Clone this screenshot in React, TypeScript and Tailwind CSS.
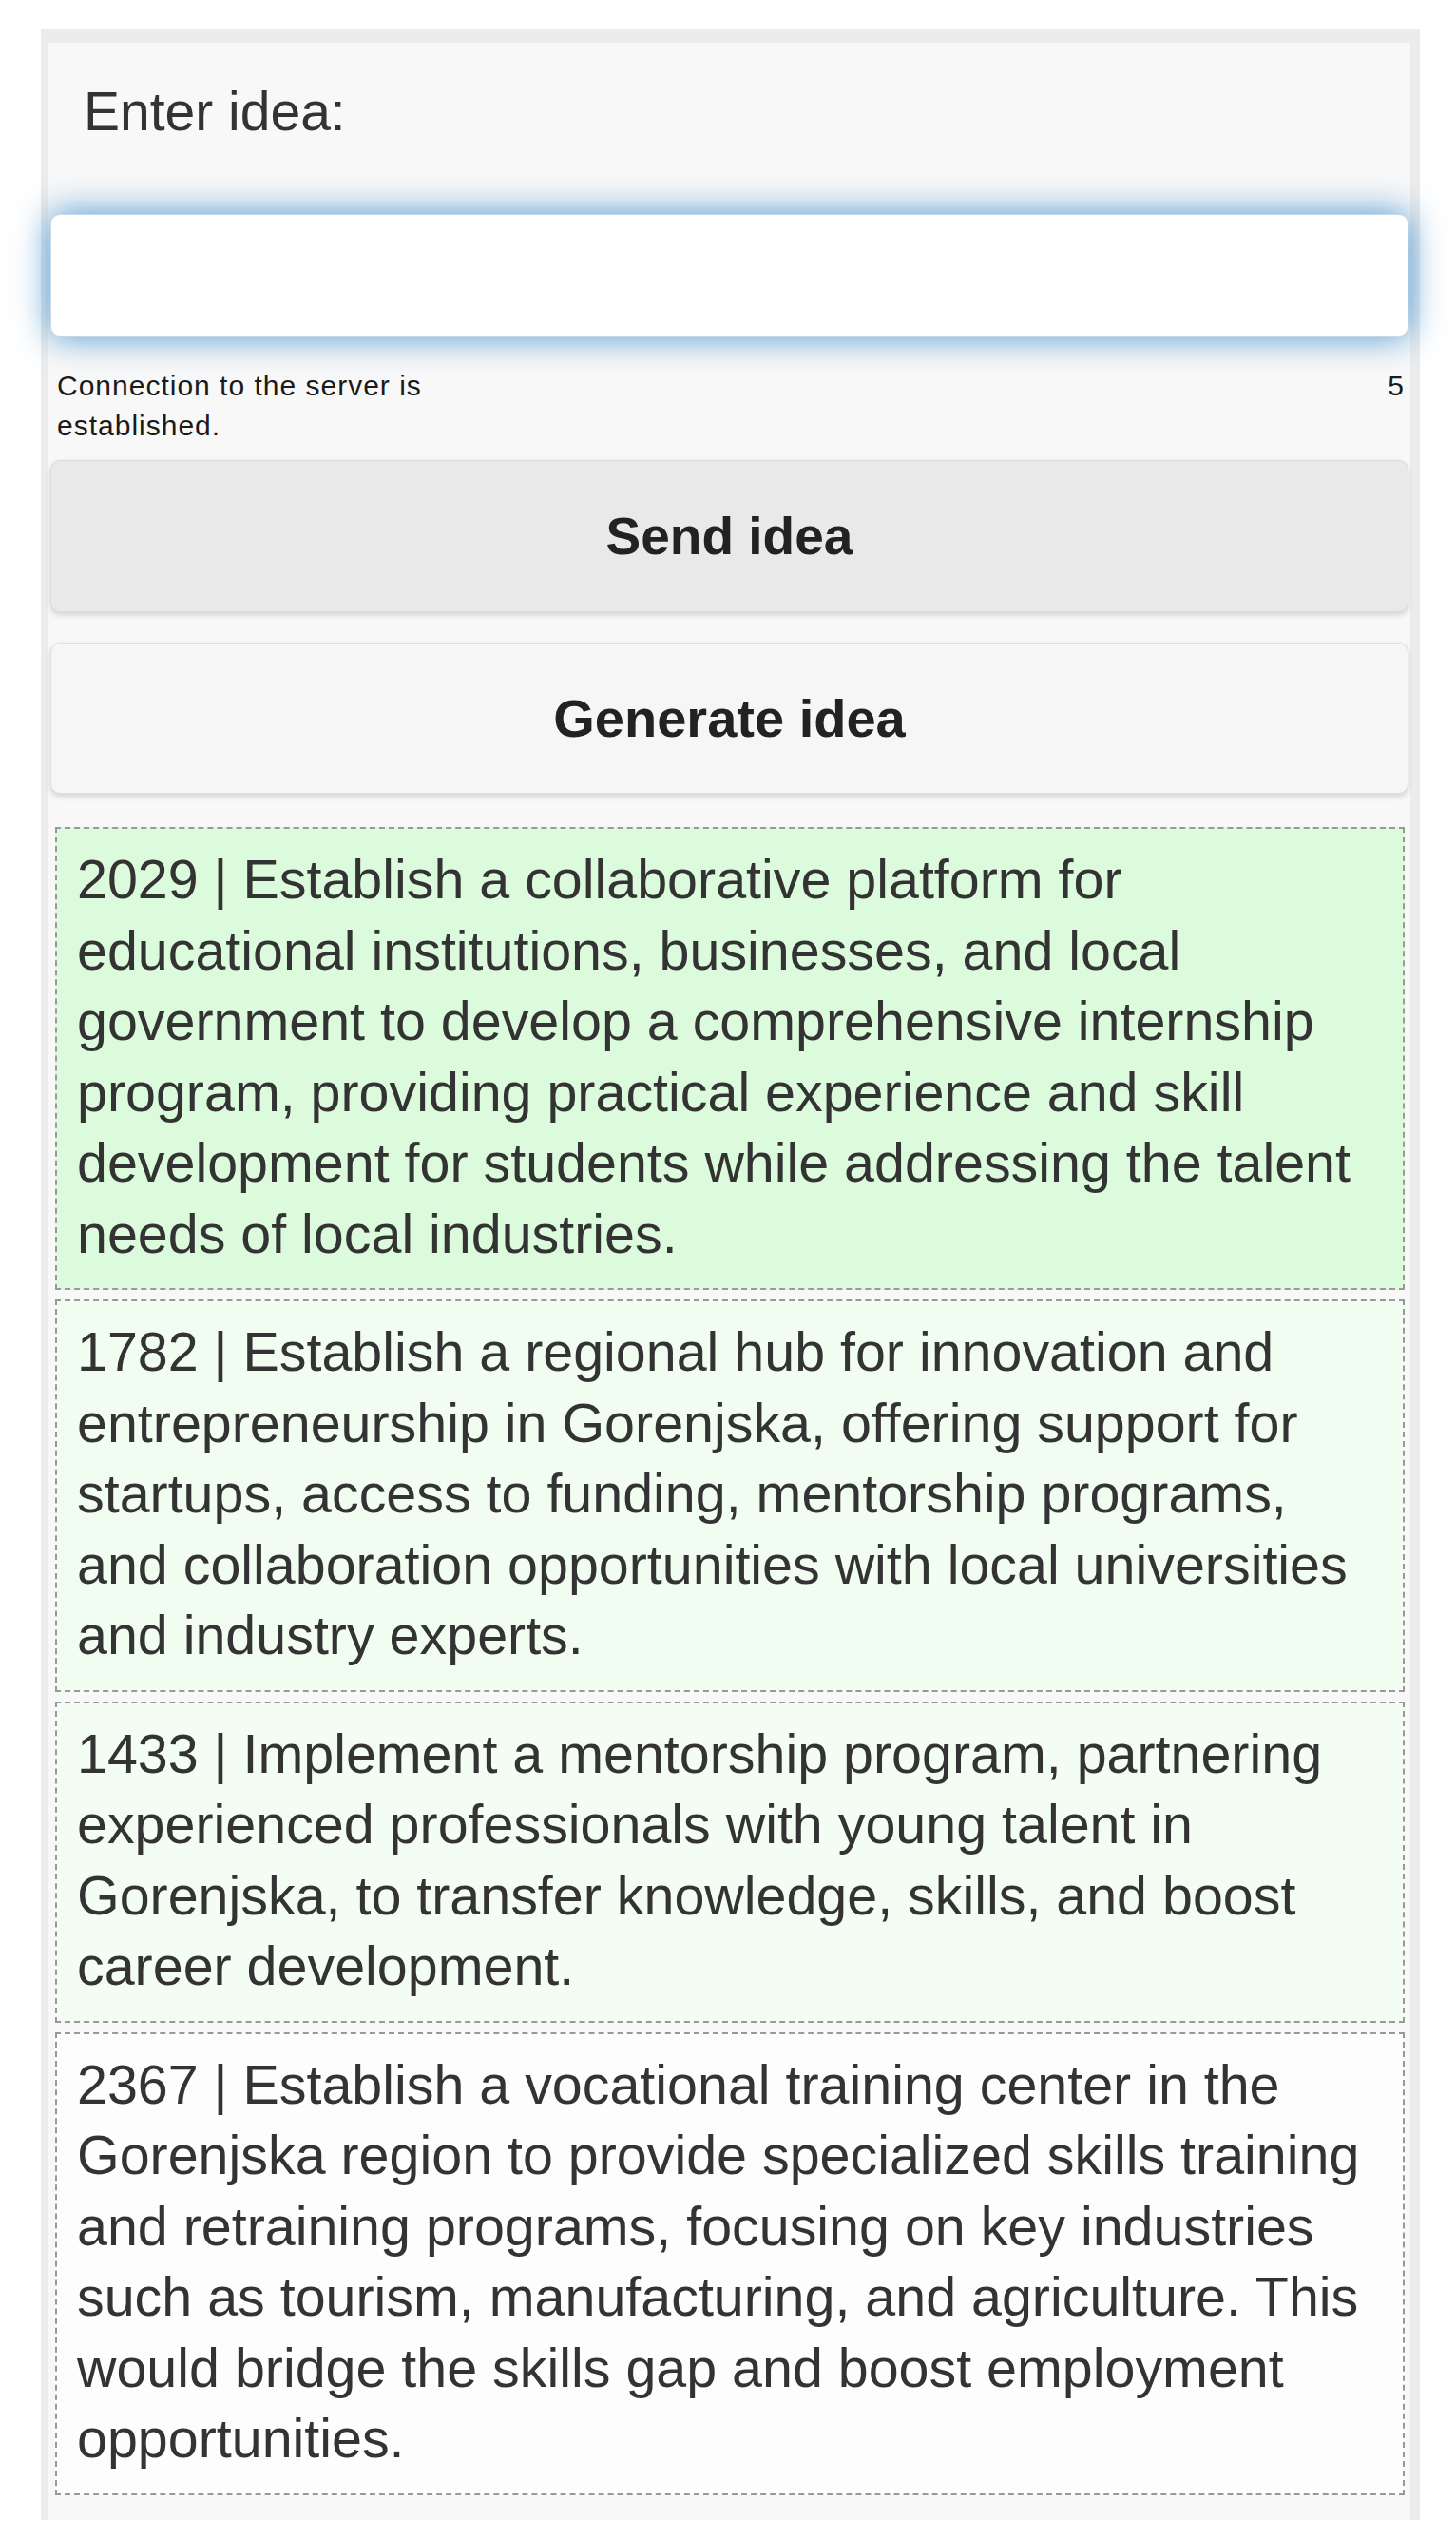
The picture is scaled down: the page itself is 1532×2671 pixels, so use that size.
import React from "react";

const ideas = [
  {
    bg: "bg-[#dcfbdc]",
    text: "2029 | Establish a collaborative platform for educational institutions, businesses, and local government to develop a comprehensive internship program, providing practical experience and skill development for students while addressing the talent needs of local industries.",
  },
  {
    bg: "bg-[#f1fdf1]",
    text: "1782 | Establish a regional hub for innovation and entrepreneurship in Gorenjska, offering support for startups, access to funding, mentorship programs, and collaboration opportunities with local universities and industry experts.",
  },
  {
    bg: "bg-[#f3fdf3]",
    text: "1433 | Implement a mentorship program, partnering experienced professionals with young talent in Gorenjska, to transfer knowledge, skills, and boost career development.",
  },
  {
    bg: "bg-[#fdfdfd]",
    text: "2367 | Establish a vocational training center in the Gorenjska region to provide specialized skills training and retraining programs, focusing on key industries such as tourism, manufacturing, and agriculture. This would bridge the skills gap and boost employment opportunities.",
  },
];

export default function App() {
  return (
    <div className="min-h-screen bg-white pt-[31px] pl-[43px] font-['Liberation_Sans',Arial,sans-serif] text-[#333]">
      <div className="w-[1451px] bg-[#f8f8f8] border-t-[14px] border-l-[7px] border-r-[10px] border-[#ececec] pb-[26px]">
        <div className="pl-[38px] pt-[41px] text-[57px] leading-[62px] text-[#333]">
          Enter idea:
        </div>

        <div className="mt-[77px] ml-[3px] mr-[2px]">
          <input
            type="text"
            className="block w-full h-[129px] rounded-[10px] bg-white border border-[#c9d8e6] shadow-[0_0_36px_rgba(51,136,204,0.9)] outline-none px-[20px] text-[50px]"
          />
        </div>

        <div className="mt-[31px] flex justify-between pl-[10px] pr-[6px] text-[30px] leading-[42px] tracking-[1px] text-[#1a1a1a]">
          <div className="w-[470px]">Connection to the server is established.</div>
          <div>5</div>
        </div>

        <div className="mt-[15px] ml-[3px] mr-[2px] flex flex-col gap-[32px]">
          <button className="h-[160px] w-full rounded-[10px] bg-[#e9e9e9] border border-[#dadada] shadow-[0_3px_6px_rgba(0,0,0,0.15)] text-[55px] font-bold text-[#222]">
            Send idea
          </button>
          <button className="h-[159px] w-full rounded-[10px] bg-[#f6f6f6] border border-[#dedede] shadow-[0_3px_6px_rgba(0,0,0,0.15)] text-[56px] font-bold text-[#222]">
            Generate idea
          </button>
        </div>

        <div className="mt-[35px] ml-[8px] mr-[6px] flex flex-col gap-[10px]">
          {ideas.map((idea, i) => (
            <div
              key={i}
              className={`${idea.bg} border-2 border-dashed border-[#999999] pl-[21px] pr-[28px] pt-[16px] pb-[20px] text-[57.4px] leading-[74.5px] text-[#333]`}
            >
              {idea.text}
            </div>
          ))}
        </div>
      </div>
    </div>
  );
}
